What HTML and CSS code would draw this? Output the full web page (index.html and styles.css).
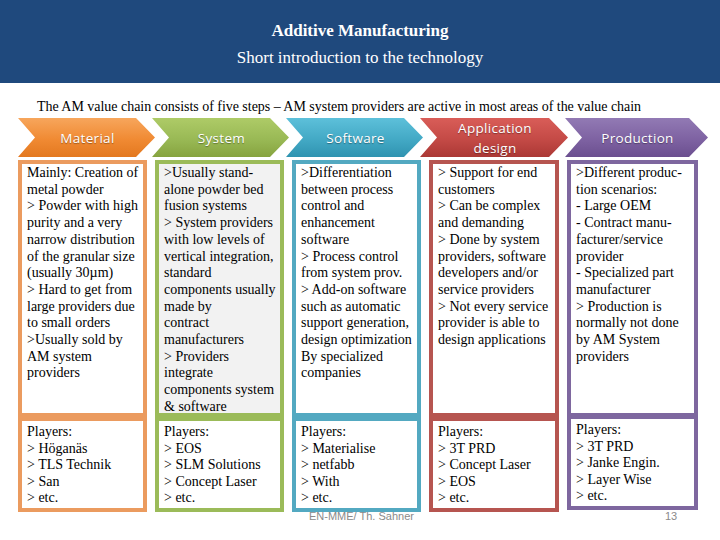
FILE: index.html
```html
<!DOCTYPE html>
<html>
<head>
<meta charset="utf-8">
<link rel="stylesheet" href="styles.css">
</head>
<body>
<div class="slide">
  <header class="head">
    <div class="title">Additive Manufacturing</div>
    <div class="subtitle">Short introduction to the technology</div>
  </header>
  <p class="intro">The AM value chain consists of five steps – AM system providers are active in most areas of the value chain</p>
  <div class="chain">
    <div class="chev c-orange"><span>Material</span></div>
    <div class="chev c-green"><span>System</span></div>
    <div class="chev c-blue"><span>Software</span></div>
    <div class="chev c-red wide"><span>Application<br>design</span></div>
    <div class="chev c-purple"><span>Production</span></div>
  </div>
  <div class="grid">
    <div class="box top b-orange">Mainly: Creation of metal powder<br>&gt; Powder with high purity and a very narrow distribution of the granular size (usually 30µm)<br>&gt; Hard to get from large providers due to small orders<br>&gt;Usually sold by AM system providers</div>
    <div class="box top b-green grey">&gt;Usually stand-alone powder bed fusion systems<br>&gt; System providers with low levels of vertical integration, standard components usually made by<br>contract manufacturers<br>&gt; Providers integrate components system &amp; software</div>
    <div class="box top b-blue">&gt;Differentiation between process control and enhancement software<br>&gt; Process control from system prov.<br>&gt; Add-on software such as automatic support generation, design optimization By specialized companies</div>
    <div class="box top b-red">&gt; Support for end customers<br>&gt; Can be complex and demanding<br>&gt; Done by system providers, software developers and/or service providers<br>&gt; Not every service provider is able to design applications</div>
    <div class="box top b-purple">&gt;Different produc-tion scenarios:<br>- Large OEM<br>- Contract manu-facturer/service provider<br>- Specialized part manufacturer<br>&gt; Production is normally not done by AM System providers</div>

    <div class="box bottom b-orange">Players:<br>&gt; Höganäs<br>&gt; TLS Technik<br>&gt; San<br>&gt; etc.</div>
    <div class="box bottom b-green">Players:<br>&gt; EOS<br>&gt; SLM Solutions<br>&gt; Concept Laser<br>&gt; etc.</div>
    <div class="box bottom b-blue">Players:<br>&gt; Materialise<br>&gt; netfabb<br>&gt; With<br>&gt; etc.</div>
    <div class="box bottom b-red">Players:<br>&gt; 3T PRD<br>&gt; Concept Laser<br>&gt; EOS<br>&gt; etc.</div>
    <div class="box bottom b-purple raised">Players:<br>&gt; 3T PRD<br>&gt; Janke Engin.<br>&gt; Layer Wise<br>&gt; etc.</div>
  </div>
  <footer class="foot">
    <span class="author">EN-MME/ Th. Sahner</span>
    <span class="page">13</span>
  </footer>
</div>
</body>
</html>
```

FILE: styles.css
```css
html, body {
  margin: 0;
  padding: 0;
  background: #ffffff;
}
.slide {
  width: 720px;
  height: 540px;
  overflow: hidden;
  font-family: "Liberation Serif", "Times New Roman", serif;
  color: #000;
}
.head {
  height: 83px;
  background: #1f497d;
  color: #ffffff;
  display: flex;
  flex-direction: column;
  align-items: center;
  box-sizing: border-box;
  padding-top: 17px;
}
.title {
  font-weight: bold;
  font-size: 17px;
  line-height: 27px;
}
.subtitle {
  font-size: 17px;
  line-height: 27px;
}
.intro {
  margin: 16px 0 0 0;
  padding-left: 37px;
  font-size: 14px;
  line-height: 16px;
  letter-spacing: -0.03px;
  white-space: nowrap;
}
.chain {
  display: flex;
  margin-top: 3px;
  padding-left: 18px;
  height: 39px;
}
.chev {
  height: 39px;
  width: 137px;
  margin-right: -3px;
  clip-path: polygon(0 0, calc(100% - 19px) 0, 100% 50%, calc(100% - 19px) 100%, 0 100%, 17px 50%);
  display: flex;
  align-items: center;
  justify-content: center;
  padding-left: 2px;
  box-sizing: border-box;
  color: #ffffff;
  font-family: "Open Sans", "Noto Sans", sans-serif;
  font-size: 13.5px;
  letter-spacing: 0.3px;
  line-height: 20px;
  text-align: center;
  text-shadow: 0 1px 1px rgba(0,0,0,0.35);
}
.chev.wide { width: 148px; }
.chev:nth-child(5) { width: 143px; }
.c-orange { background: linear-gradient(#f7a65c, #f08a33 55%, #e3781f); }
.c-green { background: linear-gradient(#aecb67, #99b955 55%, #86a33f); }
.c-blue { background: linear-gradient(#5dc0da, #43a9c5 55%, #2f93b0); }
.c-red { background: linear-gradient(#d95d58, #c44a46 55%, #ab3835); }
.c-purple { background: linear-gradient(#927ab4, #7e62a2 55%, #6b4f8f); }

.grid {
  display: grid;
  grid-template-columns: 129px 129px 129px 130px 131px;
  grid-template-rows: 257px 95px;
  column-gap: 8px;
  margin-top: 3px;
  padding-left: 18px;
}
.box {
  box-sizing: border-box;
  border: 4px solid #000;
  background: #ffffff;
  font-size: 14px;
  line-height: 16.7px;
  padding: 1px 3px 0 5px;
}
.box.bottom {
  padding-top: 3px;
  line-height: 16.6px;
}
.box.raised {
  margin-top: -2px;
  height: 95px;
}
.box.grey { background: #f2f2f2; }
.b-orange { border-color: #eb9b5f; }
.b-green { border-color: #9bbb59; }
.b-blue { border-color: #53a9c1; }
.b-red { border-color: #b65550; }
.b-purple { border-color: #7e679f; }

.foot {
  display: flex;
  align-items: center;
  margin-top: -3px;
  height: 13px;
  font-family: "Liberation Sans", Arial, sans-serif;
  font-size: 11px;
  color: #8a8a8a;
}
.author {
  margin-left: 309px;
}
.page {
  margin-left: 251px;
}
```
